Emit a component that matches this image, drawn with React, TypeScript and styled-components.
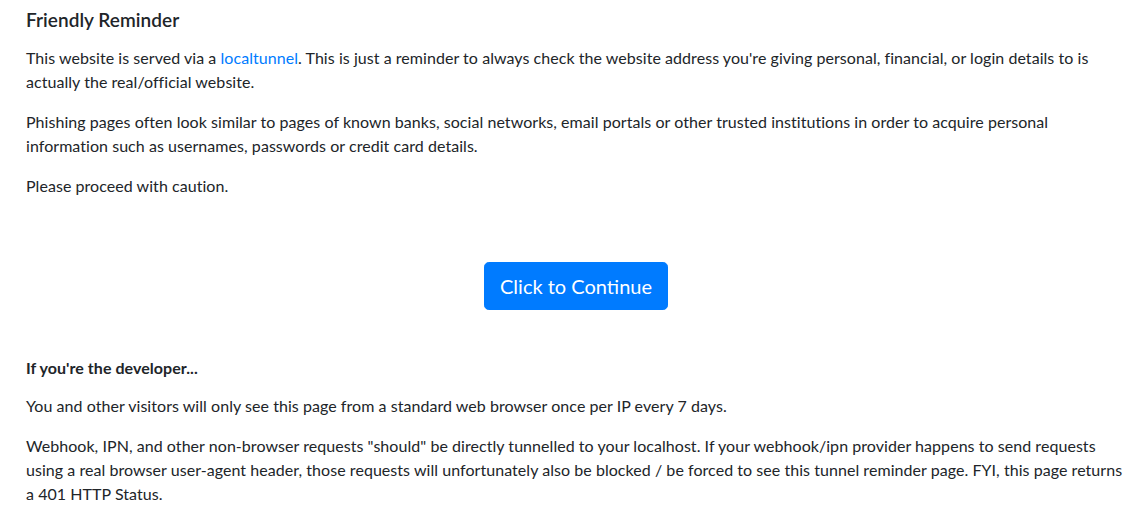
import React from "react";
import styled, { createGlobalStyle } from "styled-components";

const Global = createGlobalStyle`
  html, body {
    margin: 0;
    padding: 0;
    background: #ffffff;
  }
  body {
    font-family: "Lato", "Open Sans", sans-serif;
    font-size: 16px;
    line-height: 1.5;
    color: #212529;
    letter-spacing: 0.05px;
  }
`;

const Container = styled.main`
  width: 1100px;
  padding: 8px 0 0 26px;
`;

const Title = styled.h1`
  margin: 0 0 14px;
  font-size: 19px;
  font-weight: 600;
  line-height: 24px;
  color: #212529;
`;

const Para = styled.p<{ $tight?: boolean }>`
  margin: 0 0 ${(p) => (p.$tight ? "14px" : "16px")};
  line-height: 24px;
`;

const Link = styled.a`
  color: #007bff;
  text-decoration: none;
`;

const ButtonRow = styled.div`
  display: flex;
  justify-content: center;
  margin: 64px 0 46px;
`;

const Button = styled.button`
  font-family: inherit;
  font-size: 20px;
  line-height: 30px;
  padding: 8px 15px;
  white-space: nowrap;
  border: 1px solid #007bff;
  border-radius: 4.8px;
  background: #007bff;
  color: #ffffff;
  cursor: pointer;
`;

const Strong = styled.strong`
  font-weight: 700;
`;

export default function App() {
  return (
    <>
      <Global />
      <Container>
        <Title>Friendly Reminder</Title>
        <Para>
          This website is served via a <Link href="#">localtunnel</Link>. This is just a reminder to always check the
          website address you're giving personal, financial, or login details to is actually the real/official website.
        </Para>
        <Para>
          Phishing pages often look similar to pages of known banks, social networks, email portals or other trusted
          institutions in order to acquire personal information such as usernames, passwords or credit card details.
        </Para>
        <Para>Please proceed with caution.</Para>
        <ButtonRow>
          <Button type="button">Click to Continue</Button>
        </ButtonRow>
        <Para $tight>
          <Strong>If you're the developer...</Strong>
        </Para>
        <Para>You and other visitors will only see this page from a standard web browser once per IP every 7 days.</Para>
        <Para>
          Webhook, IPN, and other non-browser requests "should" be directly tunnelled to your localhost. If your
          webhook/ipn provider happens to send requests using a real browser user-agent header, those requests will
          unfortunately also be blocked / be forced to see this tunnel reminder page. FYI, this page returns a 401 HTTP
          Status.
        </Para>
      </Container>
    </>
  );
}
